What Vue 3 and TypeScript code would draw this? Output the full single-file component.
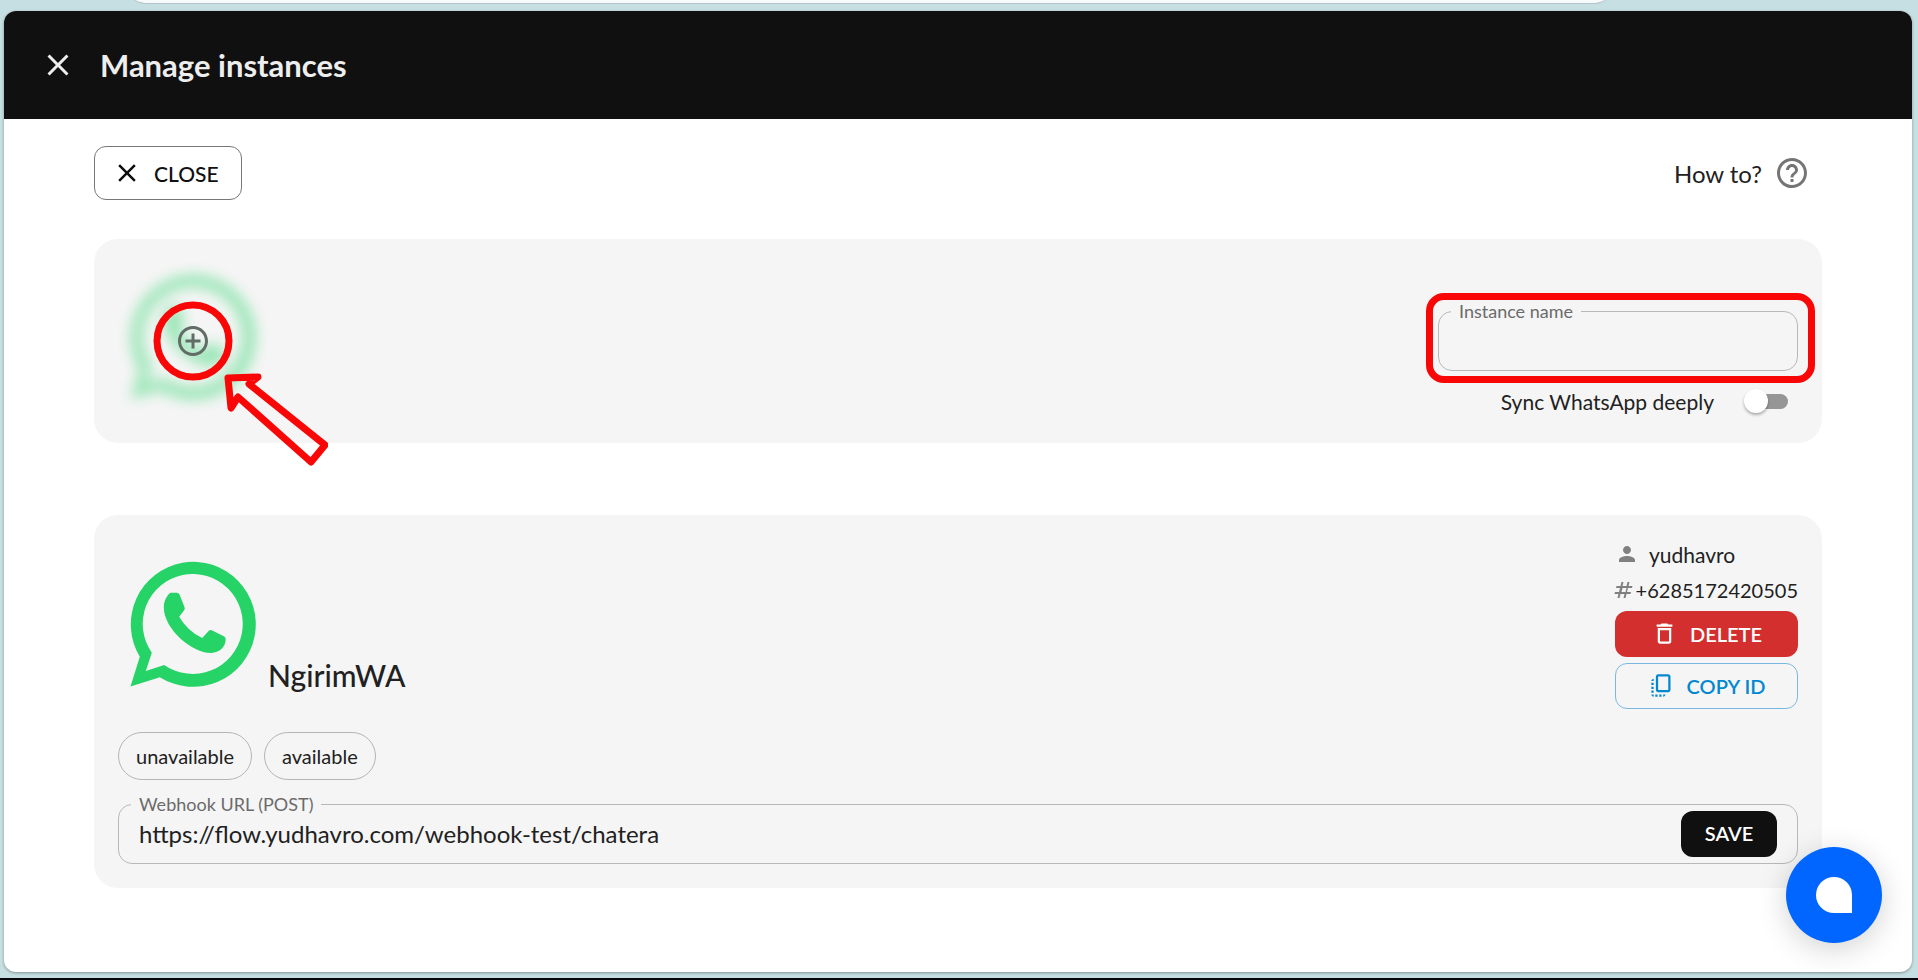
<script setup lang="ts">
import { ref } from 'vue'

const instanceName = ref<string>('')
const syncDeeply = ref<boolean>(false)
const webhookUrl = ref<string>('https://flow.yudhavro.com/webhook-test/chatera')
const statuses: string[] = ['unavailable', 'available']
const closePath =
  'M19 6.41 17.59 5 12 10.59 6.41 5 5 6.41 10.59 12 5 17.59 6.41 19 12 13.41 17.59 19 19 17.59 13.41 12z'
const bubblePath =
  'M3.49 17.23A10 10 0 1 1 6.69 20.5L2 22ZM5.41 16.59L4.45 19.52L7.39 18.56A8 8 0 1 0 5.41 16.59Z'
const phonePath =
  'M8.4 7H9.4Q9.7 7 9.83 7.25L10.65 9.3Q10.75 9.6 10.55 9.85L9.79 10.83Q11.1 13.1 13.47 14.24L14.5 13.1Q14.7 12.9 15 13L17 14Q17.25 14.15 17.23 14.45C17.2 15.9 16 16.64 14.8 16.64C12 16.64 7.33 12.9 7.33 9.3C7.33 8.4 7.8 7.4 8.4 7Z'
</script>

<template>
  <div class="page">
    <div class="backdrop-panel"></div>
    <section class="dialog" aria-labelledby="dialog-title">
      <header class="bar">
        <button class="bar-close" type="button" aria-label="Close dialog">
          <svg class="icon-lg" viewBox="0 0 24 24"><path :d="closePath" /></svg>
        </button>
        <h1 id="dialog-title">Manage instances</h1>
      </header>

      <main class="body">
        <div class="toolbar">
          <button class="btn btn-close" type="button">
            <svg class="icon-md" viewBox="0 0 24 24"><path :d="closePath" /></svg>
            CLOSE
          </button>
          <a class="howto" href="#">
            How to?
            <svg class="icon-lg" viewBox="0 0 24 24">
              <path d="M11 18h2v-2h-2zm1-16C6.48 2 2 6.48 2 12s4.48 10 10 10 10-4.48 10-10S17.52 2 12 2m0 18c-4.41 0-8-3.59-8-8s3.59-8 8-8 8 3.59 8 8-3.59 8-8 8m0-14c-2.21 0-4 1.79-4 4h2c0-1.1.9-2 2-2s2 .9 2 2c0 2-3 1.75-3 5h2c0-2.25 3-2.5 3-5 0-2.21-1.79-4-4-4" />
            </svg>
          </a>
        </div>

        <section class="card card-new">
          <div class="add-area">
            <svg class="logo logo-faded" viewBox="0 0 24 24">
              <path :d="bubblePath" /><path :d="phonePath" />
            </svg>
            <button class="add" type="button" aria-label="Add instance">
              <svg class="icon-lg" viewBox="0 0 24 24">
                <path d="M13 7h-2v4H7v2h4v4h2v-4h4v-2h-4zm-1-5C6.48 2 2 6.48 2 12s4.48 10 10 10 10-4.48 10-10S17.52 2 12 2m0 18c-4.41 0-8-3.59-8-8s3.59-8 8-8 8 3.59 8 8-3.59 8-8 8" />
              </svg>
            </button>
            <svg class="marker" viewBox="0 0 210 210">
              <circle cx="75" cy="75" r="36" />
              <path d="M110 112L140 111L131 118L207 179L193 196L120 131L113 142Z" />
            </svg>
          </div>
          <div class="new-form">
            <div class="marked">
              <fieldset class="field">
                <legend><label for="instance-name">Instance name</label></legend>
                <input id="instance-name" v-model="instanceName" type="text" />
              </fieldset>
            </div>
            <label class="sync">
              Sync WhatsApp deeply
              <input v-model="syncDeeply" class="switch" type="checkbox" role="switch" />
            </label>
          </div>
        </section>

        <section class="card card-instance">
          <div class="summary">
            <div class="identity">
              <svg class="logo" viewBox="0 0 24 24">
                <path :d="bubblePath" /><path :d="phonePath" />
              </svg>
              <h2>NgirimWA</h2>
            </div>
            <div class="details">
              <div class="detail detail-user">
                <svg class="icon-sm" viewBox="0 0 24 24">
                  <path d="M12 12c2.21 0 4-1.79 4-4s-1.79-4-4-4-4 1.79-4 4 1.79 4 4 4m0 2c-2.67 0-8 1.34-8 4v2h16v-2c0-2.66-5.33-4-8-4" />
                </svg>
                <span>yudhavro</span>
              </div>
              <div class="detail detail-phone">
                <svg class="icon-sm" viewBox="0 0 24 24">
                  <path d="m20 10 .5-2h-4l1-4h-2l-1 4h-4l1-4h-2l-1 4h-4L4 10h4l-1 4H3l-.5 2h4l-1 4h2l1-4h4l-1 4h2l1-4h4l.5-2h-4l1-4zm-6.500 4h-4l1-4h4z" />
                </svg>
                <span>+6285172420505</span>
              </div>
              <button class="btn btn-delete" type="button">
                <svg class="icon-btn" viewBox="0 0 24 24">
                  <path d="M6 19c0 1.100.9 2 2 2h8c1.100 0 2-.9 2-2V7H6zM8 9h8v10H8zm7.500-5-1-1h-5l-1 1H5v2h14V4z" />
                </svg>
                DELETE
              </button>
              <button class="btn btn-copy" type="button">
                <svg class="icon-btn" viewBox="0 0 24 24">
                  <path d="M18 2H9c-1.100 0-2 .9-2 2v12c0 1.100.9 2 2 2h9c1.100 0 2-.9 2-2V4c0-1.100-.9-2-2-2m0 14H9V4h9zM3 15v-2h2v2zm0-5.500h2v2H3zM10 20h2v2h-2zm-7-1.500v-2h2v2zM5 22c-1.100 0-2-.9-2-2h2zm3.500 0h-2v-2h2zm5 0v-2h2c0 1.100-.9 2-2 2M5 6v2H3c0-1.100.9-2 2-2" />
                </svg>
                COPY ID
              </button>
            </div>
          </div>

          <div class="chips">
            <button v-for="status in statuses" :key="status" class="chip" type="button">{{ status }}</button>
          </div>

          <fieldset class="field">
            <legend><label for="webhook-url">Webhook URL (POST)</label></legend>
            <input id="webhook-url" v-model="webhookUrl" type="text" />
            <button class="btn btn-save" type="button">SAVE</button>
          </fieldset>
        </section>
      </main>
    </section>

    <button class="chat" type="button" aria-label="Open chat"><span class="chat-drop"></span></button>
  </div>
</template>

<style>
body {
  margin: 0;
}
</style>

<style scoped>
.page {
  position: relative;
  box-sizing: border-box;
  min-height: 100vh;
  display: flex;
  flex-direction: column;
  padding: 0 6px 6px 4px;
  border-bottom: 2px solid #05070a;
  background: #c6dfe3;
  color: #212121;
  font-family: Lato, "Open Sans", sans-serif;
}

.page *,
.page *::after {
  box-sizing: border-box;
}

.backdrop-panel {
  height: 44px;
  margin: -40px 298px 7px 122px;
  border-bottom: 1px solid #b4c4c8;
  border-radius: 0 0 20px 20px;
  background: #f7fafb;
}

.dialog {
  flex: 1;
  overflow: hidden;
  border-radius: 12px;
  background: #fff;
  box-shadow: 0 1px 3px rgba(0, 0, 0, 0.35);
}

svg {
  display: block;
  flex: none;
  fill: currentColor;
}

.icon-lg {
  width: 36px;
  height: 36px;
}

.icon-md {
  width: 30px;
  height: 30px;
}

.icon-btn {
  width: 27px;
  height: 27px;
}

.icon-sm {
  width: 24px;
  height: 24px;
}

button {
  padding: 0;
  border: 0;
  background: none;
  color: inherit;
  font: inherit;
  cursor: pointer;
}

.bar {
  display: flex;
  align-items: center;
  gap: 24px;
  height: 108px;
  padding: 0 36px;
  background: #101010;
  color: #eee;
}

.bar h1 {
  margin: 0;
  font-size: 31px;
  line-height: 36px;
  font-weight: 700;
}

.body {
  padding: 27px 90px 72px;
}

.toolbar {
  display: flex;
  align-items: center;
  justify-content: space-between;
  padding-right: 12px;
}

.btn {
  display: flex;
  align-items: center;
  justify-content: center;
  gap: 12px;
  height: 46px;
  padding-bottom: 1px;
  border-radius: 12px;
  font-size: 20px;
  font-weight: 600;
}

.btn-close {
  height: 54px;
  padding: 0 22px 0 17px;
  border: 1px solid #777;
  color: #101010;
  font-size: 21px;
  font-weight: 500;
}

.howto {
  display: flex;
  align-items: center;
  gap: 12px;
  color: inherit;
  font-size: 24px;
  text-decoration: none;
}

.howto svg {
  color: #757575;
}

.card {
  border-radius: 24px;
  background: #f5f5f5;
}

.card-new {
  display: flex;
  justify-content: space-between;
  align-items: flex-end;
  margin-top: 39px;
  padding: 23px 24px;
}

.add-area {
  position: relative;
  display: grid;
  place-items: center;
  height: 158px;
}

.add-area > .logo,
.add-area > .add {
  grid-area: 1 / 1;
}

.logo {
  width: 150px;
  height: 150px;
  color: #25d366;
}

.logo-faded {
  align-self: start;
  opacity: 0.46;
  filter: blur(7px);
  overflow: visible;
}

.add {
  z-index: 1;
  color: #616c66;
}

.marker {
  position: absolute;
  z-index: 2;
  top: 4px;
  left: 0;
  width: 210px;
  height: 210px;
  fill: none;
  stroke: #f90606;
  stroke-width: 7px;
  stroke-linejoin: round;
  pointer-events: none;
}

.new-form {
  display: flex;
  flex-direction: column;
  gap: 15px;
  width: 360px;
  margin-bottom: 4px;
}

.marked {
  position: relative;
}

.marked::after {
  content: "";
  position: absolute;
  inset: -9px -17px -12px -12px;
  border: 7px solid #f90606;
  border-radius: 18px;
  pointer-events: none;
}

.field {
  display: flex;
  align-items: center;
  min-width: 0;
  height: 69px;
  margin: 0;
  padding: 0 20px 9px;
  border: 1px solid #b8b8b8;
  border-radius: 14px;
}

.field legend {
  height: 18px;
  margin-left: -8px;
  padding: 0 8px;
  color: #6b6b6b;
  font-size: 18px;
  line-height: 18px;
}

.field input {
  flex: 1;
  width: 100%;
  min-width: 0;
  height: 40px;
  padding: 0;
  border: 0;
  outline: 0;
  background: none;
  color: inherit;
  font: inherit;
  font-size: 24px;
}

.sync {
  display: flex;
  align-items: center;
  justify-content: flex-end;
  gap: 36px;
  height: 30px;
  padding-right: 10px;
  font-size: 21px;
}

.switch {
  position: relative;
  width: 38px;
  height: 15px;
  margin: 0;
  border-radius: 8px;
  appearance: none;
  background: #969696;
  cursor: pointer;
}

.switch::after {
  content: "";
  position: absolute;
  top: -5px;
  left: -6px;
  width: 24px;
  height: 24px;
  border-radius: 50%;
  background: #fff;
  box-shadow: 0 2px 3px rgba(0, 0, 0, 0.3);
}

.switch:checked::after {
  left: 20px;
}

.card-instance {
  margin-top: 72px;
  padding: 24px;
}

.summary {
  display: flex;
  align-items: center;
  justify-content: space-between;
}

.identity {
  display: flex;
  align-items: flex-end;
}

.identity h2 {
  margin: 0 0 6px;
  font-size: 30px;
  line-height: 36px;
  font-weight: 500;
}

.details {
  display: flex;
  flex-direction: column;
  gap: 6px;
  width: 183px;
}

.detail {
  display: flex;
  align-items: center;
  height: 30px;
}

.detail-user {
  gap: 10px;
  font-size: 21px;
}

.detail-phone {
  justify-content: flex-end;
  font-size: 20px;
}

.detail svg {
  color: #808080;
}

.btn-delete {
  background: #d32f2f;
  color: #fff;
}

.btn-copy {
  border: 1px solid #7ab8e2;
  color: #0288d1;
}

.chips {
  display: flex;
  gap: 12px;
  margin: 23px 0 15px;
}

.chip {
  height: 48px;
  padding: 0 17px;
  border: 1px solid #b5b5b5;
  border-radius: 24px;
  font-size: 20px;
}

.btn-save {
  width: 96px;
  background: #101010;
  color: #fff;
}

.chat {
  position: fixed;
  right: 36px;
  bottom: 37px;
  display: grid;
  place-items: center;
  width: 96px;
  height: 96px;
  border-radius: 50%;
  background: #06f;
  box-shadow: 0 6px 30px rgba(0, 0, 0, 0.18);
}

.chat-drop {
  width: 36px;
  height: 36px;
  border-radius: 50% 50% 0 50%;
  background: #fff;
}
</style>
